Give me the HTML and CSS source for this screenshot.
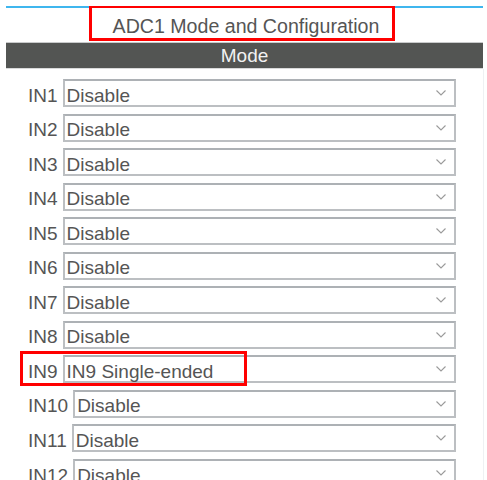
FILE: index.html
```html
<!DOCTYPE html>
<html lang="en">
<head>
    <meta charset="UTF-8">
    <meta name="viewport" content="width=device-width, initial-scale=1.0">
    <title>ADC1 Mode and Configuration</title>
    <link rel="stylesheet" href="styles.css">
</head>
<body>
    <div class="panel">
        <div class="header">
            <span class="title">ADC1 Mode and Configuration</span>
        </div>
        <div class="section-head">Mode</div>
        <div class="rows" id="rows"></div>
    </div>

    <script>
        const channels = [
            ['IN1', 'Disable'],
            ['IN2', 'Disable'],
            ['IN3', 'Disable'],
            ['IN4', 'Disable'],
            ['IN5', 'Disable'],
            ['IN6', 'Disable'],
            ['IN7', 'Disable'],
            ['IN8', 'Disable'],
            ['IN9', 'IN9 Single-ended'],
            ['IN10', 'Disable'],
            ['IN11', 'Disable'],
            ['IN12', 'Disable']
        ];

        const chevron = '<svg class="chevron" width="10" height="6" viewBox="0 0 10 6">' +
            '<path d="M0.5 0.5 L5 5 L9.5 0.5" fill="none" stroke="#9a9a9a" stroke-width="1.1"/></svg>';

        const rowsDiv = document.getElementById('rows');
        for (let i = 0; i < channels.length; i++) {
            const rowDiv = document.createElement('div');
            rowDiv.classList.add('row');
            rowDiv.innerHTML =
                `<span class="label">${channels[i][0]}</span>` +
                `<div class="select"><span class="value">${channels[i][1]}</span>${chevron}</div>`;
            if (channels[i][1] !== 'Disable') {
                const mark = document.createElement('div');
                mark.classList.add('highlight');
                rowDiv.appendChild(mark);
            }
            rowsDiv.appendChild(rowDiv);
        }
    </script>
</body>
</html>
```

FILE: styles.css
```css
html, body {
    margin: 0;
    height: 100%;
    overflow: hidden;
    background: #fff;
}
body {
    font-family: 'Liberation Sans', Arial, sans-serif;
    color: #555;
}
.panel {
    margin: 6px 0 0 6px;
    width: 478px;
    height: 474px;
    overflow: hidden;
}
.header {
    display: flex;
    justify-content: center;
    width: 477px;
    height: 34px;
    border-top: 2px solid #3fb6ee;
}
.title {
    margin: -3px 0 0 -5px;
    height: 36px;
    box-sizing: border-box;
    padding: 7px 13px 0 21px;
    border: 3px solid #f00;
    background: #fff;
    font-size: 19.6px;
    line-height: 22px;
    white-space: nowrap;
}
.section-head {
    width: 477px;
    height: 25px;
    line-height: 25px;
    border-top: 1px solid #c9cacb;
    border-bottom: 1px solid #d8d9da;
    background: #535553;
    color: #f2f2f2;
    font-size: 19px;
    text-align: center;
}
.rows {
    display: flex;
    flex-direction: column;
    gap: 6.55px;
    padding: 10px 27px 0 22px;
    border-right: 1px solid #eef1f3;
    height: 100%;
}
.row {
    position: relative;
    display: flex;
    align-items: baseline;
    gap: 5px;
    font-size: 19px;
}
.label {
    flex: none;
}
.select {
    flex: 1;
    display: flex;
    align-items: center;
    height: 28px;
    box-sizing: border-box;
    padding: 0 8px 0 2px;
    border: 2px solid #bcbfc2;
    border-top-color: #adb1b5;
    background: #fff;
}
.value {
    line-height: 21px;
    margin-top: 4px;
    white-space: nowrap;
}
.chevron {
    margin-left: auto;
    flex: none;
}
/* red annotation box round the selected channel */
.highlight {
    position: absolute;
    left: -8px;
    top: -4px;
    width: 227px;
    height: 35px;
    box-sizing: border-box;
    border: 3px solid #f00;
}
```
